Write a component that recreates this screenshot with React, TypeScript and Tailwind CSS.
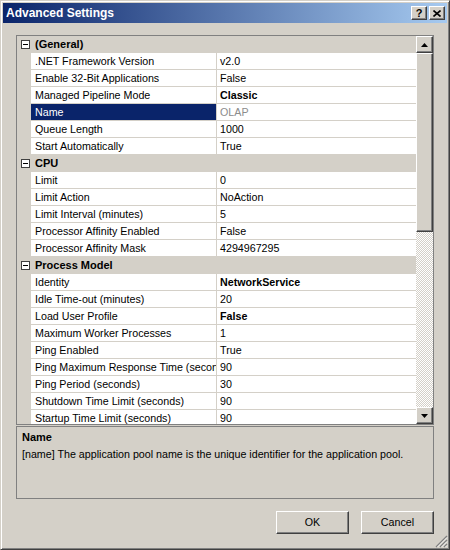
import React from "react";

type Row =
  | { kind: "cat"; label: string }
  | { kind: "prop"; label: string; value: string; bold?: boolean; selected?: boolean; readOnly?: boolean };

const rows: Row[] = [
  { kind: "cat", label: "(General)" },
  { kind: "prop", label: ".NET Framework Version", value: "v2.0" },
  { kind: "prop", label: "Enable 32-Bit Applications", value: "False" },
  { kind: "prop", label: "Managed Pipeline Mode", value: "Classic", bold: true },
  { kind: "prop", label: "Name", value: "OLAP", selected: true, readOnly: true },
  { kind: "prop", label: "Queue Length", value: "1000" },
  { kind: "prop", label: "Start Automatically", value: "True" },
  { kind: "cat", label: "CPU" },
  { kind: "prop", label: "Limit", value: "0" },
  { kind: "prop", label: "Limit Action", value: "NoAction" },
  { kind: "prop", label: "Limit Interval (minutes)", value: "5" },
  { kind: "prop", label: "Processor Affinity Enabled", value: "False" },
  { kind: "prop", label: "Processor Affinity Mask", value: "4294967295" },
  { kind: "cat", label: "Process Model" },
  { kind: "prop", label: "Identity", value: "NetworkService", bold: true },
  { kind: "prop", label: "Idle Time-out (minutes)", value: "20" },
  { kind: "prop", label: "Load User Profile", value: "False", bold: true },
  { kind: "prop", label: "Maximum Worker Processes", value: "1" },
  { kind: "prop", label: "Ping Enabled", value: "True" },
  { kind: "prop", label: "Ping Maximum Response Time (seconds)", value: "90" },
  { kind: "prop", label: "Ping Period (seconds)", value: "30" },
  { kind: "prop", label: "Shutdown Time Limit (seconds)", value: "90" },
  { kind: "prop", label: "Startup Time Limit (seconds)", value: "90" },
];

const raised =
  "border border-t-white border-l-white border-r-[#404040] border-b-[#404040] shadow-[inset_-1px_-1px_0_#808080]";

function MinusBox() {
  return (
    <svg width="9" height="9" viewBox="0 0 9 9" className="block">
      <rect x="0.5" y="0.5" width="8" height="8" fill="#fff" stroke="#404040" />
      <line x1="2" y1="4.5" x2="7" y2="4.5" stroke="#000" />
    </svg>
  );
}

function Arrow({ down }: { down?: boolean }) {
  return (
    <svg width="7" height="4" viewBox="0 0 7 4" className="block">
      <polygon points={down ? "0,0 7,0 3.5,4" : "3.5,0 7,4 0,4"} fill="#000" />
    </svg>
  );
}

function GridRow({ row }: { row: Row }) {
  if (row.kind === "cat") {
    return (
      <div className="flex h-[17px] shrink-0 items-center bg-[#d4d0c8]">
        <div className="flex w-[14px] shrink-0 justify-end pr-[1px]">
          <MinusBox />
        </div>
        <span className="pl-[4px] text-[11px] font-bold">{row.label}</span>
      </div>
    );
  }
  return (
    <div className="flex h-[17px] shrink-0">
      <div className="w-[14px] shrink-0 bg-[#d4d0c8]" />
      <div
        className={`flex w-[186px] shrink-0 items-center overflow-hidden whitespace-nowrap border-b border-r border-[#d4d0c8] pl-[4px] ${
          row.selected ? "bg-[#0a246a] text-white" : "bg-white text-black"
        }`}
      >
        {row.label}
      </div>
      <div
        className={`flex flex-1 items-center overflow-hidden whitespace-nowrap border-b border-[#d4d0c8] bg-white pl-[3px] ${
          row.bold ? "font-bold" : ""
        } ${row.readOnly ? "text-[#8c8c8c]" : "text-black"}`}
      >
        {row.value}
      </div>
    </div>
  );
}

export default function App() {
  return (
    <div
      className="flex h-[550px] w-[450px] flex-col border border-t-[#d4d0c8] border-l-[#d4d0c8] border-r-[#404040] border-b-[#404040] bg-[#d4d0c8] text-[10.7px] text-black shadow-[inset_1px_1px_0_#fff,inset_-1px_-1px_0_#808080]"
      style={{ fontFamily: '"Liberation Sans", Arial, sans-serif' }}
    >
      <div className="mx-[2px] mt-[2px] flex h-[20px] shrink-0 items-center bg-[linear-gradient(90deg,#0a246a,#a6caf0)] pl-[3px] pr-[2px]">
        <span className="flex-1 text-[12px] font-bold text-white">Advanced Settings</span>
        <div className="flex gap-[2px]">
          <button className={`flex h-[14px] w-[16px] items-center justify-center bg-[#d4d0c8] text-[11px] font-bold leading-none ${raised}`}>
            ?
          </button>
          <button className={`flex h-[14px] w-[16px] items-center justify-center bg-[#d4d0c8] ${raised}`}>
            <svg width="8" height="7" viewBox="0 0 8 7" className="block">
              <path d="M0.5 0.5 L7.5 6.5 M7.5 0.5 L0.5 6.5" stroke="#000" strokeWidth="1.6" />
            </svg>
          </button>
        </div>
      </div>

      <div className="flex flex-1 flex-col px-[15px] pt-[12px]">
        <div className="flex h-[390px] shrink-0 border border-[#808080] bg-[#d4d0c8]">
          <div className="flex flex-1 flex-col overflow-hidden">
            {rows.map((r, i) => (
              <GridRow key={i} row={r} />
            ))}
          </div>
          <div className="flex w-[17px] shrink-0 flex-col bg-[repeating-conic-gradient(#d4d0c8_0_25%,#ffffff_0_50%)] bg-[length:2px_2px]">
            <div className={`flex h-[17px] shrink-0 items-center justify-center bg-[#d4d0c8] ${raised}`}>
              <Arrow />
            </div>
            <div className={`h-[179px] shrink-0 bg-[#d4d0c8] ${raised}`} />
            <div className="flex-1" />
            <div className={`flex h-[17px] shrink-0 items-center justify-center bg-[#d4d0c8] ${raised}`}>
              <Arrow down />
            </div>
          </div>
        </div>

        <div className="mt-[1px] flex h-[73px] shrink-0 flex-col border border-[#808080] px-[5px] pt-[2px]">
          <span className="text-[11px] font-bold leading-[17px]">Name</span>
          <span className="whitespace-nowrap leading-[16px]">
            [name] The application pool name is the unique identifier for the application pool.
          </span>
        </div>

        <div className="mt-[12px] flex justify-end gap-[12px] pr-[0px]">
          <button className={`h-[23px] w-[73px] bg-[#d4d0c8] ${raised}`}>OK</button>
          <button className={`h-[23px] w-[73px] bg-[#d4d0c8] ${raised}`}>Cancel</button>
        </div>
      </div>
      <div className="flex justify-end pb-[1px] pr-[1px]">
        <svg width="13" height="13" viewBox="0 0 13 13" className="block">
          <path d="M12 1 L1 12 M12 5 L5 12 M12 9 L9 12" stroke="#808080" strokeWidth="1.4" />
          <path d="M12 2.5 L2.5 12 M12 6.5 L6.5 12 M12 10.5 L10.5 12" stroke="#fff" strokeWidth="0.8" />
        </svg>
      </div>
    </div>
  );
}
